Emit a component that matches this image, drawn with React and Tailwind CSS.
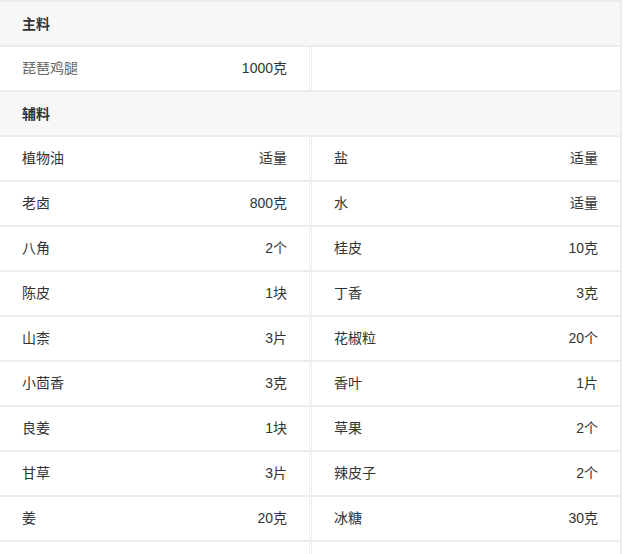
import React from "react";

const rows = [
  ["植物油", "适量", "盐", "适量"],
  ["老卤", "800克", "水", "适量"],
  ["八角", "2个", "桂皮", "10克"],
  ["陈皮", "1块", "丁香", "3克"],
  ["山柰", "3片", "花椒粒", "20个"],
  ["小茴香", "3克", "香叶", "1片"],
  ["良姜", "1块", "草果", "2个"],
  ["甘草", "3片", "辣皮子", "2个"],
  ["姜", "20克", "冰糖", "30克"],
  ["葱段", "适量", "料酒", "适量"],
];

function Cell({ label, value, muted, last }) {
  return (
    <div
      className={`flex h-full items-center justify-between px-[22px] ${
        last ? "w-[310px] border-r-2" : "w-[312px] border-r-[3px] border-double"
      } border-[#ececec]`}
    >
      <span className={muted ? "text-[#666]" : "text-[#333]"}>{label}</span>
      <span className="text-[#333]">{value}</span>
    </div>
  );
}

function Header({ title }) {
  return (
    <div className="flex h-[45px] items-center border-b-2 border-r-2 border-[#ececec] bg-[#f7f7f7] px-[22px] pt-[2px] font-bold text-[#333]">
      {title}
    </div>
  );
}

function Row({ children }) {
  return <div className="flex h-[45px] border-b-2 border-[#ececec] bg-white">{children}</div>;
}

export default function App() {
  return (
    <div
      className="h-[554px] w-[628px] overflow-hidden bg-white text-[14px]"
      style={{ fontFamily: '"Liberation Sans", "Noto Sans CJK SC", sans-serif' }}
    >
      <div className="w-[622px] border-t-2 border-[#ececec]">
        <Header title="主料" />
        <Row>
          <Cell label="琵琶鸡腿" value="1000克" muted />
          <Cell label="" value="" last />
        </Row>
        <Header title="辅料" />
        {rows.map((r, i) => (
          <Row key={i}>
            <Cell label={r[0]} value={r[1]} />
            <Cell label={r[2]} value={r[3]} last />
          </Row>
        ))}
      </div>
    </div>
  );
}
